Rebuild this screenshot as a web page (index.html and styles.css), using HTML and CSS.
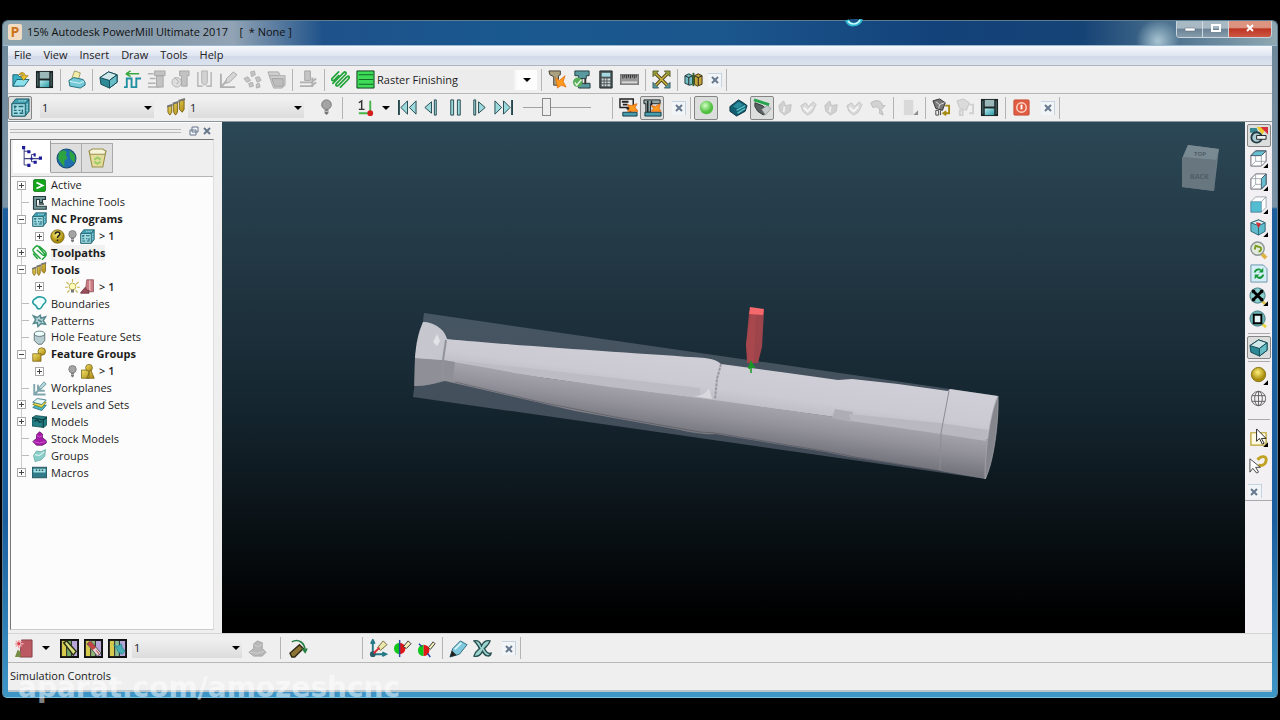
FILE: index.html
```html
<!DOCTYPE html>
<html lang="en">
  <head>
    <meta charset="UTF-8" />
    <meta name="viewport" content="width=device-width, initial-scale=1.0" />
    <title>Autodesk PowerMill Ultimate 2017</title>
    <link rel="stylesheet" href="styles.css">
  </head>
  <body>
    <!-- Icon library -->
    <svg class="sprite" aria-hidden="true">
      <defs>
        <linearGradient id="gTeal" x1="0" y1="0" x2="1" y2="1"><stop offset="0" stop-color="#b5ecef" /><stop offset="1" stop-color="#2b97a3" /></linearGradient>
        <linearGradient id="gGold" x1="0" y1="0" x2="1" y2="1"><stop offset="0" stop-color="#f3e26a" /><stop offset="1" stop-color="#a8850e" /></linearGradient>
        <radialGradient id="gBall" cx=".4" cy=".35"><stop offset="0" stop-color="#d4ffc4" /><stop offset="1" stop-color="#4fbf3f" /></radialGradient>
        <radialGradient id="gYBall" cx=".45" cy=".35"><stop offset="0" stop-color="#fff17a" /><stop offset="1" stop-color="#a98c0c" /></radialGradient>
      </defs>
      <symbol id="open" viewBox="0 0 20 20"><path d="M2 5h5l2 2h6v3L8 17H2z" fill="#3cb0c4" stroke="#1b6474" /><path d="M2 17l4-7h13l-5 7z" fill="#8be2ec" stroke="#1b6474" /><path d="M8 5c3-4 7-2 7 1h3l-5 5-3-5h3c0-2-2-2-5-1z" fill="#edc32a" stroke="#8b6b10" stroke-width=".7" /></symbol>
      <symbol id="save" viewBox="0 0 20 20"><path d="M1 1h18v18H1z" fill="#1c2526" /><path d="M5 2h10v7H5z" fill="#9bb8b8" /><path d="M5 11h10v7H5z" fill="url(#gTeal)" /><path d="M3 3v14M17 3v14" stroke="#577" /></symbol>
      <symbol id="print" viewBox="0 0 20 20"><path d="M5 9L8 1l6 2-2 7z" fill="#f4edaa" stroke="#8b8748" stroke-width=".8" /><path d="M2 11l5-3 10 2 2 3v3l-5 3-11-2z" fill="#73c9d7" stroke="#236d7c" /><path d="M3 12l10 2 5-2" fill="none" stroke="#d9f5fa" /></symbol>
      <symbol id="block" viewBox="0 0 20 20"><path d="M1 8l9-6 9 3v8l-8 6-9-4z" fill="#2d8995" stroke="#124a54" /><path d="M1 8l9-6 9 3-8 6z" fill="#d0e8ea" stroke="#124a54" /><path d="M11 11l8-6v8l-8 6z" fill="#68bdc6" stroke="#124a54" /></symbol>
      <symbol id="rapid" viewBox="0 0 20 20"><path d="M1 18h3V9h5v9h5V9h5" fill="none" stroke="#2290a1" stroke-width="2" /><path d="M3 4h14M3 4l5-3M3 4l5 3" stroke="#3aa83e" stroke-width="1.6" fill="none" /></symbol>
      <symbol id="gFeed" viewBox="0 0 20 20"><path d="M8 1h11v5H8z M10 6h7v12h-7z" fill="#c2c2c2" stroke="#a8a8a8" /><path d="M1 4h6M3 9h6M1 14h8M1 18h12" stroke="#b2b2b2" stroke-width="1.6" /></symbol>
      <symbol id="gPoint" viewBox="0 0 20 20"><circle cx="6" cy="13" r="5" fill="#ddd" stroke="#b2b2b2" /><path d="M9 1h10v5h-2v11h-6V6H9z" fill="#c2c2c2" stroke="#a8a8a8" /><path d="M4 8l4 4-2 3" stroke="#aaa" fill="none" /></symbol>
      <symbol id="gLead" viewBox="0 0 20 20"><path d="M7 1h6v11c0 5-6 5-6 0z" fill="#d2d2d2" stroke="#b2b2b2" /><path d="M3 2v15h5M17 2v15h-5" stroke="#bbb" stroke-width="1.700" fill="none" /></symbol>
      <symbol id="gAxis" viewBox="0 0 20 20"><path d="M2 4v14h15M3 17L15 3" stroke="#b1b1b1" stroke-width="2" fill="none" /><path d="M8 9l7-7 4 3-8 8-4 1z" fill="#d5d5d5" stroke="#aaa" /></symbol>
      <symbol id="gPattern" viewBox="0 0 20 20"><g fill="#c4c4c4" stroke="#a5a5a5" stroke-width=".8"><path d="M8 2l4-1 1 4-4 2zM1 9l4-2 3 4-4 2zM13 8l4-1 2 4-4 2zM6 14l4-1 1 4-4 1zM14 15l3-1 1 4-4 1z" /></g></symbol>
      <symbol id="gStack" viewBox="0 0 20 20"><path d="M1 2h11l2 4h5v10l-3 3H7l-2-5z" fill="#cfcfcf" stroke="#a9a9a9" /><path d="M3 6h10M5 9h12v8H8z" fill="#bdbdbd" stroke="#a2a2a2" /></symbol>
      <symbol id="gPress" viewBox="0 0 20 20"><path d="M6 1h6v10H6z" fill="#c4c4c4" stroke="#a5a5a5" /><path d="M1 13h12l5-4M1 17h12l5-4M14 8v10" fill="none" stroke="#b0b0b0" stroke-width="2" /></symbol>
      <symbol id="strategy" viewBox="0 0 20 20"><path d="M5 2L2 5c-2 2 0 4 2 6l7 7M5 2c2-2 4 0 5 2l6 7c2 2 0 4-2 2L7 7M10 2l7 6c3 3 2 6 0 8l-3 3M2 12l5 6" fill="none" stroke="#22a43a" stroke-width="2" stroke-linecap="round" /></symbol>
      <symbol id="strategyBar" viewBox="0 0 20 20"><path d="M1 9l7-7M2 14L13 3c2-2 4 0 2 2L6 14c-2 2 0 4 2 2L17 7c2-2 3 1 1 3l-8 8M1 9c-1 2 1 3 3 1l4-4" fill="none" stroke="#22a43a" stroke-width="1.800" stroke-linecap="round" /></symbol>
      <symbol id="raster" viewBox="0 0 20 20"><path d="M1 1h18v18H1z" fill="#3ddb58" stroke="#123a1c" /><path d="M3 5h15M3 10h15M3 15h15" stroke="#136a24" stroke-width="1.300" /></symbol>
      <symbol id="toolCheck" viewBox="0 0 20 20"><path d="M1 1h12v4l-2 1v10H6V7L2 5z" fill="#aaa17f" stroke="#463e30" /><path d="M8 8l4 3 6-5-2 6 3 6-5-2-4 3-1-6z" fill="#ff9a1e" stroke="#e06d0d" stroke-width=".8" /></symbol>
      <symbol id="machCheck" viewBox="0 0 20 20"><path d="M3 1h15v5h-3v3H7V6H3zM7 14h12v5H7z" fill="#599aa1" stroke="#243c40" /><path d="M10 9v6M14 9v6" stroke="#333" stroke-width="2" /><circle cx="6" cy="13" r="5" fill="#59ae5a" /><path d="M3 13l2 3 5-6" stroke="#e2f5dd" stroke-width="1.500" fill="none" /></symbol>
      <symbol id="calc" viewBox="0 0 20 20"><path d="M4 1h13v18H4z" fill="#4b5658" stroke="#202728" /><path d="M6 3h9v4H6z" fill="#a7dae0" /><path d="M6 10h2m1 0h2m1 0h3M6 13h2m1 0h2m1 0h3M6 16h2m1 0h2m1 0h3" stroke="#d2d7d7" stroke-width="2" /></symbol>
      <symbol id="ruler" viewBox="0 0 20 20"><path d="M0 5h20v10H0z" fill="#979797" stroke="#606060" /><path d="M3 5v4m2-4v3m2-3v4m2-4v3m2-3v4m2-4v3m2-3v4m2-4v3" stroke="#2c2c2c" /><path d="M2 13h16" stroke="#d7d7d7" stroke-width="2" /></symbol>
      <symbol id="cross" viewBox="0 0 20 20"><path d="M4 4l12 12M16 4L4 16" stroke="#4c4720" stroke-width="3.500" /><path d="M1 1h6L1 7zM19 1v6l-6-6z" fill="#94a236" stroke="#4c4720" stroke-width=".8" /><path d="M1 19v-6l6 6zM19 19h-6l6-6z" fill="#5599a4" stroke="#2c4c50" stroke-width=".8" /><path d="M4 4l12 12M16 4L4 16" stroke="#cfb83c" stroke-width="1.500" /></symbol>
      <symbol id="mirror" viewBox="0 0 20 20"><path d="M1 6l4-2 4 2v9l-3 1-5-2z" fill="#72bdc4" stroke="#203c3e" /><path d="M11 6l4-2 4 2v9l-5 2-3-2z" fill="#c5a53c" stroke="#3d3514" /><path d="M1 6l4 2 4-2M5 8v8M11 6l4 2 4-2M15 8v8" fill="none" stroke="#222" /><path d="M10 3v14" stroke="#37602e" stroke-width="2" /></symbol>
      <symbol id="nc" viewBox="0 0 20 20"><path d="M1 6l4-5h14v13l-4 5H1z" fill="#3f9fb0" stroke="#1d5a66" /><path d="M1 6h14v13H1z" fill="#a5dde5" stroke="#1d5a66" /><path d="M15 6l4-5" stroke="#1d5a66" /><path d="M4 8v3M3 9h3M8 9h5M3 13h3M8 13h2M12 12v3M3 16h4M9 16h4" stroke="#1b6a78" stroke-width="1.500" /><path d="M8 3h8M17 6v8" stroke="#c9f3f7" stroke-dasharray="2 1" /></symbol>
      <symbol id="tools" viewBox="0 0 20 20"><path d="M1 9l4-1v7l-2 3-2-3zM7 6l4-1v10l-2 3-2-3zM13 3l5-1v10l-2 3-3-3z" fill="url(#gGold)" stroke="#806617" /><path d="M0 9l6-2M6 6l6-2M12 3l7-2" stroke="#777" stroke-width="2" /></symbol>
      <symbol id="bulbOff" viewBox="0 0 20 20"><circle cx="10" cy="7" r="5" fill="#a4a4a4" stroke="#747474" /><path d="M8 12h4v4l-2 2-2-2z" fill="#777" /><path d="M8 14h4" stroke="#ccc" /></symbol>
      <symbol id="bulbOn" viewBox="0 0 20 20"><path d="M10 0v4M2 4l3 3M18 4l-3 3M0 11h4M16 11h4M3 18l3-3M17 18l-3-3" stroke="#c8b954" stroke-width="1.500" /><circle cx="10" cy="10" r="4.500" fill="#fffbb9" stroke="#a89e2c" /><path d="M8 14h4v4H8z" fill="#777" /></symbol>
      <symbol id="workplane" viewBox="0 0 20 20"><path d="M3 16h12M15 3v12" stroke="#45b54a" stroke-width="2" /><path d="M3 5l3-2v9M3 12h6" fill="none" stroke="#333" stroke-width="1.500" /><circle cx="15" cy="16" r="3" fill="#d61d1d" /></symbol>
      <symbol id="rewind" viewBox="0 0 20 20"><path d="M1 2v16" stroke="#25484d" stroke-width="2" /><path d="M10 3v14l-7-7zM19 3v14l-7-7z" fill="#9bd9dc" stroke="#25484d" /></symbol>
      <symbol id="stepBack" viewBox="0 0 20 20"><path d="M10 4v12l-7-6z" fill="#9bd9dc" stroke="#25484d" /><path d="M13 2h2v16h-2z" fill="#9bd9dc" stroke="#25484d" /></symbol>
      <symbol id="pause" viewBox="0 0 20 20"><path d="M5 2h3v16H5zM12 2h3v16h-3z" fill="#9bd9dc" stroke="#25484d" /></symbol>
      <symbol id="stepFwd" viewBox="0 0 20 20"><path d="M4 2h2v16H4z" fill="#9bd9dc" stroke="#25484d" /><path d="M9 4v12l7-6z" fill="#9bd9dc" stroke="#25484d" /></symbol>
      <symbol id="forward" viewBox="0 0 20 20"><path d="M19 2v16" stroke="#25484d" stroke-width="2" /><path d="M1 3v14l7-7zM10 3v14l7-7z" fill="#9bd9dc" stroke="#25484d" /></symbol>
      <symbol id="simA" viewBox="0 0 20 20"><path d="M1 1h14v9H1z" fill="#eee" stroke="#222" stroke-width="1.500" /><path d="M3 4h7M4 7h5M8 11h4v4" stroke="#222" stroke-width="2" /><path d="M4 15h15v4H4z" fill="#489eae" stroke="#163b43" /><path d="M9 7l4 1 6-2-2 4 3 4H9l2-3z" fill="#ff991f" stroke="#d9620d" stroke-width=".8" /></symbol>
      <symbol id="simB" viewBox="0 0 20 20"><path d="M1 2h17v4H8v9H3V6H1z" fill="#90a6a7" stroke="#222" /><path d="M5 3v13M9 3v5" stroke="#222" stroke-width="1.500" /><path d="M2 15h17v4H2z" fill="#489eae" stroke="#163b43" /><path d="M9 8l4 1 5-3-1 5 2 3H9l2-3z" fill="#ff991f" stroke="#d9620d" stroke-width=".8" /></symbol>
      <symbol id="ball" viewBox="0 0 20 20"><circle cx="10" cy="10" r="7" fill="url(#gBall)" /></symbol>
      <symbol id="stockBlue" viewBox="0 0 20 20"><path d="M1 9l9-7 5 3 4 3-2 6-9 5-7-5z" fill="#145e72" stroke="#073140" /><path d="M4 9l6-5 5 3-6 4z" fill="#2a8b9c" /><path d="M8 13l9-5M9 16l8-5" stroke="#56c2c7" stroke-width="1.500" /></symbol>
      <symbol id="stockGreen" viewBox="0 0 20 20"><path d="M2 5l8 3 6 5-5 5-6-4-3-5z" fill="#596060" stroke="#303737" /><path d="M9 12l6-4 4 3-6 7z" fill="#c6cccb" stroke="#777" stroke-width=".5" /><path d="M1 2l16 5" stroke="#25a44c" stroke-width="3" /></symbol>
      <symbol id="ghostA" viewBox="0 0 20 20"><path d="M3 8l5-5 2 5 6-1-1 7-6 4-5-4z" fill="#d0d0d0" stroke="#c2c2c2" /><path d="M9 9l-1 6M10 5l3-2" stroke="#eee" stroke-width="2" /></symbol>
      <symbol id="ghostB" viewBox="0 0 20 20"><path d="M2 8l5-3 3 4 5-5 3 3-4 8-5 3-5-4z" fill="#d9d9d9" stroke="#c4c4c4" /><path d="M5 10l4 4 5-5" stroke="#f7f7f7" fill="none" stroke-width="2" /></symbol>
      <symbol id="ghostC" viewBox="0 0 20 20"><path d="M3 5c6-4 12-2 12 3h3l-4 4 2 6-4-2c1-5-1-8-7-6z" fill="#d2d2d2" stroke="#bcbcbc" /></symbol>
      <symbol id="doc" viewBox="0 0 20 20"><path d="M4 2h10v16H4z" fill="#d9d9d9" /><path d="M19 13v5h-5z" fill="#8e8e8e" /></symbol>
      <symbol id="entity" viewBox="0 0 20 20"><path d="M1 3l7-2 6 4-3 8-7-2z" fill="#777" stroke="#333" /><path d="M4 4l4 3 5-2M8 7l-1 4" stroke="#ddd" fill="none" /><path d="M4 13h3v5H4zM9 13v5" fill="#eee" stroke="#444" /><path d="M14 8h4v8h-5m2-2l-3 2 3 2" stroke="#a78a12" stroke-width="2" fill="none" /></symbol>
      <symbol id="entityOff" viewBox="0 0 20 20"><path d="M1 3l7-2 6 4-3 8-7-2z" fill="#dadada" stroke="#c5c5c5" /><path d="M4 13h3v5H4zM14 7h4v9h-4" fill="none" stroke="#d0d0d0" stroke-width="2" /></symbol>
      <symbol id="power" viewBox="0 0 20 20"><rect x="2" y="2" width="16" height="16" rx="1" fill="#e05c42" stroke="#c9503b" /><circle cx="10" cy="10" r="5" fill="none" stroke="#ffd8ca" stroke-width="1.500" /><path d="M10 7v5" stroke="#fff" stroke-width="2" /></symbol>
      <symbol id="close" viewBox="0 0 12 12"><path d="M3 3l6 6M9 3L3 9" stroke="#67788e" stroke-width="2" /></symbol>
      <symbol id="float" viewBox="0 0 12 12"><path d="M4 2h6v5H4zM2 5h6v5H2z" fill="#f3f6fa" stroke="#65758a" /></symbol>

      <!-- Explorer -->
      <symbol id="treeTab" viewBox="0 0 20 20"><path d="M3 2v16M3 5h4M3 18h5M3 12h15M10 8v7M10 8h3M10 15h4" fill="none" stroke="#444a80" /><path d="M1 0h3v3H1zM6 4h3v3H6zM6 17h3v3H6zM12 7h2v3h-2zM12 14h3v3h-3zM17 10h3v3h-3zM9 11h2v2H9z" fill="#1c1b9b" /></symbol>
      <symbol id="globe" viewBox="0 0 20 20"><circle cx="10" cy="10" r="9" fill="#1e6fb0" stroke="#174c75" /><path d="M3 4c5-4 9 0 6 2l2 4-3 2v6L3 12l-1-3zM13 2l5 5v7l-4-3-1-4z" fill="#2da43f" /></symbol>
      <symbol id="bin" viewBox="0 0 20 20"><path d="M2 3h16l-3 15H5z" fill="#e4dc9d" stroke="#99904a" /><path d="M2 3l3-2h10l3 2-1 3H3z" fill="#f5f4da" stroke="#99904a" /><path d="M7 11l3-2 3 2M13 13l-3 2-3-2" stroke="#9bcc66" stroke-width="2" fill="none" /></symbol>
      <symbol id="active" viewBox="0 0 20 20"><rect x="2" y="2" width="16" height="16" rx="2" fill="#13a51b" stroke="#08720d" /><path d="M6 6l8 4-8 4" fill="none" stroke="#fff" stroke-width="2.500" /></symbol>
      <symbol id="machine" viewBox="0 0 20 20"><path d="M2 2h16v4h-4v4h-4V6H6v9h13v4H2z" fill="#74979a" stroke="#243b3d" stroke-width="1.500" /><path d="M9 12h7" stroke="#243b3d" stroke-width="2" /></symbol>
      <symbol id="question" viewBox="0 0 20 20"><circle cx="10" cy="10" r="9" fill="url(#gYBall)" stroke="#756010" /><path d="M7 7c0-4 7-4 6 0 0 2-3 2-3 5M10 14v2" fill="none" stroke="#222" stroke-width="2" /></symbol>
      <symbol id="cutter" viewBox="0 0 20 20"><path d="M9 1h9v16H7z" fill="#c97c84" stroke="#8d4f58" /><path d="M13 2v14" stroke="#eab7bb" stroke-width="2" /><path d="M1 18l6-7 2 4h3v4H1z" fill="#9c4e5a" stroke="#6c323b" /></symbol>
      <symbol id="boundary" viewBox="0 0 20 20"><path d="M5 3c4-3 11-2 13 2 2 5-3 4-4 8-3 6-7 5-8 1-1-3-5-2-5-6 0-3 2-4 4-5z" fill="#f2ffff" stroke="#299fa1" stroke-width="2.200" /></symbol>
      <symbol id="pattern" viewBox="0 0 20 20"><path d="M2 4l5 2 4-3 1 4 6-2-3 5 3 5-6-1-4 4-1-5-5 1 3-5z" fill="#b9d8da" stroke="#55898e" stroke-width="2" /><path d="M8 9l5 3" stroke="#55898e" stroke-width="2" /></symbol>
      <symbol id="hole" viewBox="0 0 20 20"><path d="M3 5v9l5 5h5l4-5V5z" fill="#b8cdd1" stroke="#465a5d" /><ellipse cx="10" cy="5" rx="7" ry="3.500" fill="#edffff" stroke="#465a5d" /></symbol>
      <symbol id="feature" viewBox="0 0 20 20"><circle cx="13" cy="6" r="5" fill="url(#gGold)" stroke="#756010" /><path d="M1 9h11v10H1z" fill="url(#gGold)" stroke="#756010" /></symbol>
      <symbol id="featureSet" viewBox="0 0 20 20"><path d="M2 8h10v11H2zM9 19l5-12 5 12z" fill="url(#gGold)" stroke="#756010" /><circle cx="12" cy="5" r="4.500" fill="url(#gGold)" stroke="#756010" /></symbol>
      <symbol id="planes" viewBox="0 0 20 20"><path d="M3 4v14h15M3 18l9-9M8 5v8h9" fill="none" stroke="#7fa6ac" stroke-width="2.500" /><path d="M9 9l7-8 3 3-7 7z" fill="#b0d8dd" stroke="#58838b" /></symbol>
      <symbol id="levels" viewBox="0 0 20 20"><path d="M1 14l6-5 12 2-6 7z" fill="#48b6c3" stroke="#1a6470" /><path d="M1 10l6-5 12 2-6 7z" fill="#e7d84c" stroke="#77731c" /><path d="M1 7l6-5 12 2-6 6z" fill="#e6f8f7" stroke="#1a6470" /></symbol>
      <symbol id="models" viewBox="0 0 20 20"><path d="M0 5l5-3 15 2v10l-4 4-16-2z" fill="#237f84" stroke="#0d4448" /><path d="M0 5l15 3v10M15 8l5-4M3 10l4-2 3 3 3-1" fill="none" stroke="#0b3a3d" stroke-width="1.500" /></symbol>
      <symbol id="stock" viewBox="0 0 20 20"><path d="M1 14l5-4V5l4-4 4 3v5l5 4v3l-5 3H6z" fill="#a61ba7" stroke="#5b0c60" /><path d="M6 6l4 2 4-2M2 14l8 2 8-2" fill="none" stroke="#d767d8" /></symbol>
      <symbol id="group" viewBox="0 0 20 20"><path d="M2 10l4-6 6 1 6-3-1 9-5 5-8 2z" fill="#88cdc8" stroke="#65a7a2" /><path d="M4 9l6 1 6-5" fill="none" stroke="#ccefec" stroke-width="2" /></symbol>
      <symbol id="macro" viewBox="0 0 20 20"><path d="M0 3h20v14H0z" fill="#317a87" stroke="#183f47" /><path d="M2 5h16v5H2z" fill="#a5e0e4" /><path d="M5 7h2m2 0h2m2 0h2" stroke="#22555d" stroke-width="2" /></symbol>

      <!-- View bar -->
      <symbol id="toolView" viewBox="0 0 20 20"><path d="M1 2h7l2 5H1z" fill="#3a8794" /><path d="M8 1h11l-5 8z" fill="#eecb2b" /><path d="M12 1h8v8z" fill="#d8303a" /><circle cx="8" cy="12" r="5.500" fill="#adcbd3" stroke="#243c44" stroke-width="2" /><path d="M8 10h10v4H8z" fill="#eaf0f2" stroke="#222" /></symbol>
      <symbol id="cubeTop" viewBox="0 0 20 20"><path d="M2 7l5-5h11v11l-5 5H2z" fill="#fff" stroke="#667" /><path d="M2 7l5-5h11l-5 5z" fill="#65bfd0" stroke="#456" /><path d="M13 7v11M2 18l5-5h11M7 7v6" fill="none" stroke="#8a959c" stroke-width=".8" /><path d="M20 15v5h-5z" /></symbol>
      <symbol id="cubeRight" viewBox="0 0 20 20"><path d="M2 7l5-5h11v11l-5 5H2z" fill="#fff" stroke="#667" /><path d="M13 7l5-5v11l-5 5z" fill="#65bfd0" stroke="#456" /><path d="M2 7h11M2 18l5-5h6M7 2v11" fill="none" stroke="#8a959c" stroke-width=".8" /><path d="M20 15v5h-5z" /></symbol>
      <symbol id="cubeFront" viewBox="0 0 20 20"><path d="M2 7l5-5h11v11l-5 5H2zM13 7l5-5" fill="#fff" stroke="#9aa5aa" /><path d="M2 7h11v11H2z" fill="#54bdd2" stroke="#368" stroke-width=".5" /><path d="M20 15v5h-5z" /></symbol>
      <symbol id="cubeIso" viewBox="0 0 20 20"><path d="M2 5l8-3 7 3v9l-7 4-8-4z" fill="#5ebccd" stroke="#2d6573" /><path d="M2 5l8 3 7-3-7-3z" fill="#dbf3f6" stroke="#2d6573" /><path d="M10 8v10" stroke="#2d6573" /><path d="M8 5l4 1-2 4z" fill="#d22c35" stroke="#d22c35" /><path d="M20 15v5h-5z" /></symbol>
      <symbol id="zoomLast" viewBox="0 0 20 20"><path d="M13 13l5 5" stroke="#e0b24a" stroke-width="4" /><circle cx="9" cy="8" r="7" fill="#e3ecdc" stroke="#8a9496" stroke-width="1.500" /><path d="M6 9l1-4 3 1c4 0 3 5 0 5" fill="none" stroke="#7b9b25" stroke-width="2" /></symbol>
      <symbol id="refresh" viewBox="0 0 20 20"><path d="M2 1h13l4 4v14H2z" fill="#d5edf6" stroke="#6993ac" /><path d="M5 9c1-5 6-5 8-3l2-2v5h-5l2-2c-2-1-4 0-5 2zM16 11c-1 5-6 6-8 3l-2 2v-5h5l-2 2c2 1 4 0 5-2z" fill="#149838" /></symbol>
      <symbol id="zoomFit" viewBox="0 0 20 20"><path d="M12 13l5 5" stroke="#e0c34a" stroke-width="3" /><circle cx="9" cy="9" r="8" fill="#8dced0" stroke="#417a80" /><path d="M4 4l10 10M14 4L4 14" stroke="#000" stroke-width="3" /><path d="M3 3h4L3 7zM15 3v4l-4-4zM3 15v-4l4 4zM15 15h-4l4-4z" /><path d="M20 15v5h-5z" /></symbol>
      <symbol id="zoomBox" viewBox="0 0 20 20"><path d="M12 13l6 5" stroke="#e7d243" stroke-width="3" /><circle cx="9" cy="9" r="8" fill="#6cb6ba" stroke="#417a80" /><path d="M5 5h8v9H5z" fill="#e5f4f5" stroke="#000" stroke-width="2" /></symbol>
      <symbol id="shade" viewBox="0 0 20 20"><circle cx="10" cy="9" r="7.500" fill="url(#gYBall)" stroke="#84700d" /><path d="M20 15v5h-5z" /></symbol>
      <symbol id="wire" viewBox="0 0 20 20"><g fill="none" stroke="#626262"><circle cx="10" cy="10" r="7.500" /><ellipse cx="10" cy="10" rx="4" ry="7.500" /><path d="M3 7h14M3 13h14M10 2v16" /></g></symbol>
      <symbol id="selectBox" viewBox="0 0 20 20"><path d="M2 5h16v13H2z" fill="#fdfae3" stroke="#b99f2a" stroke-width="1.300" /><path d="M8 1v13l3-3 3 6 2-1-3-5h5z" fill="#fff" stroke="#222" /><path d="M20 15v5h-5z" /></symbol>
      <symbol id="selectLast" viewBox="0 0 20 20"><path d="M9 5c4-5 10-4 9 1s-6 6-8 4" fill="none" stroke="#c1a222" stroke-width="3" /><path d="M1 4v14l3-4 4 5 2-1-3-5h5z" fill="#fff" stroke="#444" /></symbol>

      <!-- Tool bar -->
      <symbol id="newTool" viewBox="0 0 20 20"><path d="M8 1h11v18H6z" fill="#bc5861" stroke="#87414a" /><path d="M5 1v9M1 5h9M2 2l6 6M8 2L2 8" stroke="#f0a6aa" stroke-width="1.500" /><circle cx="5" cy="5" r="1.500" fill="#d43d48" /><path d="M1 19l3-8 3 3v5z" fill="#778d43" /></symbol>
      <symbol id="toolA" viewBox="0 0 20 20"><path d="M1 1h18v18H1z" fill="#b6a7d8" stroke="#111" stroke-width="2" /><path d="M2 2h5v16H2z" fill="#d6ca4c" /><path d="M7 2h5v16H7z" fill="#77ad67" /><path d="M12 2v16M7 8v10" stroke="#222" /><path d="M4 4l3-2 10 11-3 4z" fill="#d9df83" stroke="#2c3012" stroke-width="1.500" /></symbol>
      <symbol id="toolB" viewBox="0 0 20 20"><path d="M1 1h18v18H1z" fill="#b6a7d8" stroke="#111" stroke-width="2" /><path d="M2 2h5v16H2z" fill="#d6ca4c" /><path d="M7 2h5v16H7z" fill="#94b878" /><path d="M7 8v10M12 2v16" stroke="#222" /><path d="M3 5l4-3 11 13-4 3z" fill="#e5cfd0" stroke="#555" /><path d="M4 5l3-2 5 6-3 2zM13 12l3 4" stroke="#b63939" fill="#c44444" /></symbol>
      <symbol id="toolC" viewBox="0 0 20 20"><path d="M1 1h18v18H1z" fill="#b6a7d8" stroke="#111" stroke-width="2" /><path d="M2 2h5v16H2z" fill="#d6ca4c" /><path d="M7 2h5v16H7z" fill="#8cbd96" /><path d="M7 2v16M12 2v16" stroke="#222" /><path d="M6 6l4 2 4-3 1 4 3 4-3 3-4-2-2-4z" fill="#49aeb3" stroke="#1a7e85" stroke-width=".7" /></symbol>
      <symbol id="stockOff" viewBox="0 0 20 20"><path d="M1 14l5-4V5l4-3 5 2v6l4 4-4 4H6z" fill="#b8b8b8" stroke="#a4a4a4" /><path d="M6 6l4 2 5-2M2 14l8 1 7-2" fill="none" stroke="#d0d0d0" /></symbol>
      <symbol id="swing" viewBox="0 0 20 20"><path d="M1 15L11 6l4 4-9 9H3z" fill="#8d7434" stroke="#302813" stroke-width="1.500" /><path d="M3 3c7-4 14 1 14 10m-3-3l3 4 2-4" fill="none" stroke="#227e40" stroke-width="1.700" /></symbol>
      <symbol id="axes" viewBox="0 0 20 20"><path d="M4 2v14h13M2 5l2-4 2 4M14 14l4 2-4 2" fill="none" stroke="#257986" stroke-width="2" /><circle cx="4" cy="16" r="3" fill="#255d66" /><path d="M9 9l6-7 4 4-7 6z" fill="#ebe5af" stroke="#6e692e" /><path d="M5 15l6-6" stroke="#dc2831" stroke-width="2" /></symbol>
      <symbol id="ballEnd" viewBox="0 0 20 20"><path d="M1 10a6 6 0 0 1 6-6v12a6 6 0 0 1-6-6" fill="#10c71c" /><path d="M7 4a6 6 0 0 1 0 12z" fill="#e11616" /><path d="M7 1v18" stroke="#2a47a3" stroke-width="1.500" /><path d="M11 8l5-6 3 3-5 5z" fill="#f5f0b7" stroke="#333" /></symbol>
      <symbol id="ballTip" viewBox="0 0 20 20"><path d="M1 12a6 6 0 0 1 6-6v12a6 6 0 0 1-6-6" fill="#10c71c" /><path d="M7 6a6 6 0 0 1 0 12z" fill="#e11616" /><path d="M2 5l3 3M11 15l3 4" stroke="#2a47a3" stroke-width="1.500" /><path d="M12 9l5-6 2 2-5 6z" fill="#f5f0b7" stroke="#333" /></symbol>
      <symbol id="pen" viewBox="0 0 20 20"><path d="M1 19l3-9 8-8 7 4-8 10z" fill="#7fc7dc" stroke="#346e7c" /><path d="M1 19l2-7 5 5z" fill="#222" /><path d="M6 11l7-7" stroke="#d2f3fa" stroke-width="2" /></symbol>
      <symbol id="erase" viewBox="0 0 20 20"><path d="M1 2c4-1 6 0 8 5 2-4 5-6 9-5-1 4-4 6-6 8 2 4 4 6 7 5-1 4-6 4-9-2-2 4-5 6-9 5 1-5 4-6 6-8-2-3-3-6-6-8z" fill="#9bd4ce" stroke="#284f50" stroke-width="1.500" /></symbol>
    </svg>

    <div class="window">
      <header class="titlebar">
        <span class="logo">P</span>
        <h1>15% Autodesk PowerMill Ultimate 2017 &nbsp;&nbsp; [&nbsp; * None ]</h1>
        <div class="window-buttons">
          <button aria-label="Minimize"><svg viewBox="0 0 12 10"><path d="M1 5h10v3H1z" fill="#fff" stroke="#567" stroke-width=".5" /></svg></button>
          <button aria-label="Maximize"><svg viewBox="0 0 12 10"><path d="M2 2h8v6H2z" fill="none" stroke="#fff" stroke-width="2" /></svg></button>
          <button class="quit" aria-label="Close"><svg viewBox="0 0 12 10"><path d="M3 2l6 6M9 2L3 8" stroke="#fff" stroke-width="2" /></svg></button>
        </div>
      </header>

      <nav class="menubar">
        <a href="#file">File</a>
        <a href="#view">View</a>
        <a href="#insert">Insert</a>
        <a href="#draw">Draw</a>
        <a href="#tools">Tools</a>
        <a href="#help">Help</a>
      </nav>

      <div class="toolbar main-toolbar">
        <button aria-label="Open"><svg><use href="#open" /></svg></button>
        <button aria-label="Save"><svg><use href="#save" /></svg></button>
        <i class="sep"></i>
        <button aria-label="Print"><svg><use href="#print" /></svg></button>
        <i class="sep"></i>
        <button aria-label="Block"><svg><use href="#block" /></svg></button>
        <button aria-label="Rapid moves"><svg><use href="#rapid" /></svg></button>
        <button aria-label="Feeds"><svg><use href="#gFeed" /></svg></button>
        <button aria-label="Start point"><svg><use href="#gPoint" /></svg></button>
        <button aria-label="Leads"><svg><use href="#gLead" /></svg></button>
        <button aria-label="Tool axis"><svg><use href="#gAxis" /></svg></button>
        <button aria-label="Points"><svg><use href="#gPattern" /></svg></button>
        <button aria-label="Thickness"><svg><use href="#gStack" /></svg></button>
        <i class="sep"></i>
        <button aria-label="Automatic tool"><svg><use href="#gPress" /></svg></button>
        <i class="sep"></i>
        <button aria-label="Strategies"><svg><use href="#strategyBar" /></svg></button>
        <svg class="raster"><use href="#raster" /></svg>
        <div class="combo strategy">
          <select aria-label="Strategy"><option>Raster Finishing</option></select>
        </div>
        <i class="sep"></i>
        <button aria-label="Verify toolpath"><svg><use href="#toolCheck" /></svg></button>
        <button aria-label="Verify machine"><svg><use href="#machCheck" /></svg></button>
        <button aria-label="Calculator"><svg><use href="#calc" /></svg></button>
        <button aria-label="Measure"><svg><use href="#ruler" /></svg></button>
        <i class="sep"></i>
        <button aria-label="Transform"><svg><use href="#cross" /></svg></button>
        <i class="sep"></i>
        <button aria-label="Mirror"><svg><use href="#mirror" /></svg></button>
        <button class="dismiss" aria-label="Close toolbar"><svg><use href="#close" /></svg></button>
        <i class="sep"></i>
      </div>

      <div class="toolbar sim-toolbar">
        <button class="pressed" aria-label="NC program"><svg><use href="#nc" /></svg></button>
        <div class="combo short">
          <select aria-label="NC program or toolpath"><option>1</option></select>
        </div>
        <button class="spaced" aria-label="Tool"><svg><use href="#tools" /></svg></button>
        <div class="combo tool">
          <select aria-label="Simulation tool"><option>1</option></select>
        </div>
        <button class="spaced" aria-label="Light"><svg><use href="#bulbOff" /></svg></button>
        <i class="sep"></i>
        <button class="workplane" aria-label="Workplane"><svg><use href="#workplane" /></svg></button>
        <button class="drop" aria-label="Workplane list"></button>
        <button aria-label="Rewind"><svg><use href="#rewind" /></svg></button>
        <button aria-label="Step back"><svg><use href="#stepBack" /></svg></button>
        <button aria-label="Pause"><svg><use href="#pause" /></svg></button>
        <button aria-label="Step forward"><svg><use href="#stepFwd" /></svg></button>
        <button aria-label="Fast forward"><svg><use href="#forward" /></svg></button>
        <input class="speed" type="range" min="0" max="100" value="33" aria-label="Speed" />
        <i class="sep"></i>
        <button aria-label="Machine display"><svg><use href="#simA" /></svg></button>
        <button class="pressed" aria-label="Machine collisions"><svg><use href="#simB" /></svg></button>
        <button class="dismiss far" aria-label="Close simulation toolbar"><svg><use href="#close" /></svg></button>
        <i class="sep"></i>
        <button class="pressed" aria-label="ViewMill"><svg><use href="#ball" /></svg></button>
        <i class="sep blank"></i>
        <button aria-label="Stock display"><svg><use href="#stockBlue" /></svg></button>
        <button class="pressed" aria-label="Rotate"><svg><use href="#stockGreen" /></svg></button>
        <button class="ghost" aria-label="Plain shaded"><svg><use href="#ghostA" /></svg></button>
        <button class="ghost" aria-label="Shiny shaded"><svg><use href="#ghostB" /></svg></button>
        <button class="ghost" aria-label="Rainbow shaded"><svg><use href="#ghostA" /></svg></button>
        <button class="ghost" aria-label="Direction shaded"><svg><use href="#ghostB" /></svg></button>
        <button class="ghost" aria-label="Cutting shaded"><svg><use href="#ghostC" /></svg></button>
        <i class="sep"></i>
        <button aria-label="Section"><svg><use href="#doc" /></svg></button>
        <i class="sep"></i>
        <button aria-label="Save state"><svg><use href="#entity" /></svg></button>
        <button aria-label="Restore state"><svg><use href="#entityOff" /></svg></button>
        <button aria-label="Save stock"><svg><use href="#save" /></svg></button>
        <i class="sep"></i>
        <button aria-label="Exit ViewMill"><svg><use href="#power" /></svg></button>
        <button class="dismiss far" aria-label="Close ViewMill toolbar"><svg><use href="#close" /></svg></button>
        <i class="sep"></i>
      </div>

      <main class="workspace">
        <aside class="explorer">
          <div class="pane-header">
            <span class="grip"></span>
            <button aria-label="Float pane"><svg><use href="#float" /></svg></button>
            <button aria-label="Close pane"><svg><use href="#close" /></svg></button>
          </div>
          <div class="pane-body">
            <div class="tabs">
              <button class="current" aria-label="Explorer"><svg><use href="#treeTab" /></svg></button>
              <button aria-label="Browser"><svg><use href="#globe" /></svg></button>
              <button aria-label="Recycle bin"><svg><use href="#bin" /></svg></button>
            </div>
            <ul class="tree">
              <li><button class="toggle" aria-label="Expand Active"></button><svg><use href="#active" /></svg>Active</li>
              <li><i class="branch"></i><svg><use href="#machine" /></svg>Machine Tools</li>
              <li class="bold"><button class="toggle open" aria-label="Collapse NC Programs"></button><svg><use href="#nc" /></svg>NC Programs</li>
              <li class="child"><button class="toggle" aria-label="Expand NC program 1"></button><svg><use href="#question" /></svg><svg class="bulb"><use href="#bulbOff" /></svg><svg><use href="#nc" /></svg>&gt; 1</li>
              <li class="bold"><button class="toggle" aria-label="Expand Toolpaths"></button><svg><use href="#strategy" /></svg><span class="hot">Toolpaths</span></li>
              <li class="bold"><button class="toggle open" aria-label="Collapse Tools"></button><svg><use href="#tools" /></svg>Tools</li>
              <li class="child"><button class="toggle" aria-label="Expand tool 1"></button><i class="space"></i><svg class="bulb"><use href="#bulbOn" /></svg><svg><use href="#cutter" /></svg>&gt; 1</li>
              <li><i class="branch"></i><svg><use href="#boundary" /></svg>Boundaries</li>
              <li><i class="branch"></i><svg><use href="#pattern" /></svg>Patterns</li>
              <li><i class="branch"></i><svg><use href="#hole" /></svg>Hole Feature Sets</li>
              <li class="bold"><button class="toggle open" aria-label="Collapse Feature Groups"></button><svg><use href="#feature" /></svg>Feature Groups</li>
              <li class="child"><button class="toggle" aria-label="Expand feature group 1"></button><i class="space"></i><svg class="bulb"><use href="#bulbOff" /></svg><svg><use href="#featureSet" /></svg>&gt; 1</li>
              <li><i class="branch"></i><svg><use href="#planes" /></svg>Workplanes</li>
              <li><button class="toggle" aria-label="Expand Levels and Sets"></button><svg><use href="#levels" /></svg>Levels and Sets</li>
              <li><button class="toggle" aria-label="Expand Models"></button><svg><use href="#models" /></svg>Models</li>
              <li><i class="branch"></i><svg><use href="#stock" /></svg>Stock Models</li>
              <li><i class="branch"></i><svg><use href="#group" /></svg>Groups</li>
              <li><button class="toggle" aria-label="Expand Macros"></button><svg><use href="#macro" /></svg>Macros</li>
            </ul>
          </div>
        </aside>

        <section class="viewport">
          <svg viewBox="222 122 1023 511" role="img" aria-label="Turned part inside its block">
            <defs>
              <linearGradient id="upper" gradientUnits="userSpaceOnUse" x1="700" y1="355" x2="693" y2="405"><stop offset="0" stop-color="#d0cfd7" /><stop offset=".6" stop-color="#cbcad2" /><stop offset="1" stop-color="#b9b8c0" /></linearGradient>
              <linearGradient id="lower" gradientUnits="userSpaceOnUse" x1="700" y1="392" x2="694" y2="434"><stop offset="0" stop-color="#aaa9b1" /><stop offset=".5" stop-color="#94939b" /><stop offset="1" stop-color="#76767e" /></linearGradient>
              <linearGradient id="glass" x1="0" y1="0" x2="0" y2="1"><stop offset="0" stop-color="#465662" /><stop offset="1" stop-color="#414a57" /></linearGradient>
            </defs>
            <!-- block -->
            <path d="M424 313L998 396 986 479 413 397z" fill="url(#glass)" />
            <!-- part, lit side -->
            <path d="M423 322c9 0 18 6 24 17 60 6 190 14 258 19 8 1 13 3 16 6l67 9 50 7 14-1 46 5 50 7 2-2 48 7-7 44-45-7-89-13-157-21-155-21-102-14-28-2c1-14 3-25 8-36z" fill="url(#upper)" />
            <!-- part, shaded side -->
            <path d="M415 358l28 2 102 18 155 20 157 22 89 13 45 7-5 39-46-8-90-14-25-5-110-18c-8 1-22-1-35-4l-105-19-82-19-48-11c-9 2-18 5-31 5z" fill="url(#lower)" />
            <path d="M415 358l28 2 12 2-2 18-7-1c-9 4-18 7-31 7z" fill="#8f8f97" />
            <path d="M423 322c15 1 23 10 24 18l-4 20-28-2c1-14 3-25 8-36z" fill="#c6c6ce" />
            <path d="M437 334l3 7-3 5-4-4z" fill="#e2e2e8" />
            <path d="M446 340l-3 20v19" fill="none" stroke="#92929a" stroke-width="2" />
            <path d="M452 360l93 10 155 18v10l-90-11-95-14z" fill="#bdbcc4" />
            <path d="M721 364l-4 15-2 20" fill="none" stroke="#9998a1" stroke-width="2" stroke-dasharray="3 1" />
            <path d="M694 396c8 0 12-3 15-8l3 11z" fill="#d9d8df" />
            <path d="M835 409l18 3-2 10-19-4z" fill="#aeadb5" />
            <path d="M849 414l91 9 48 7-2 11-45-7-90-13z" fill="#b9b8c0" />
            <path d="M949 391l-8 42-1 37" fill="none" stroke="#8d8c95" />
            <path d="M455 382l85 20 70 14 90 16 15 1 115 19 25 5 85 14" fill="none" stroke="#3a3d46" stroke-opacity=".4" />
            <!-- end face -->
            <path d="M998 396c-7 15-13 51-13 83 8-14 14-56 13-83z" fill="#85858d" stroke="#aaa9b0" stroke-width=".7" />
            <!-- cutter -->
            <path d="M749 313l15-2-2 36-4 16h-11l-1-18z" fill="#9d454b" />
            <path d="M751 314l5 1-2 47h-5l-3-17z" fill="#a9474e" />
            <path d="M750 307l14 2-1 6-14-1z" fill="#f5696d" />
            <path d="M751 361v12M748 367h7M749 369l2-7 3 6" fill="none" stroke="#189b20" stroke-width="1.500" />
            <!-- view cube -->
            <path d="M1188 145l31 4-5 42-32-4 1-31z" fill="#6b7b84" />
            <path d="M1188 145l31 4-3 11-33-3z" fill="#7a8a92" />
            <path d="M1182 157l34 3-2 31-32-4z" fill="#67767f" />
            <text x="1190" y="179" class="cube-text">BACK</text>
            <text x="1194" y="156" class="cube-text top">TOP</text>
          </svg>
        </section>

        <div class="viewbar">
          <button class="pressed" aria-label="Tool view"><svg><use href="#toolView" /></svg></button>
          <button aria-label="View from top"><svg><use href="#cubeTop" /></svg></button>
          <button aria-label="View from right"><svg><use href="#cubeRight" /></svg></button>
          <button aria-label="View from front"><svg><use href="#cubeFront" /></svg></button>
          <button aria-label="Isometric view"><svg><use href="#cubeIso" /></svg></button>
          <button aria-label="Last view"><svg><use href="#zoomLast" /></svg></button>
          <button aria-label="Refresh"><svg><use href="#refresh" /></svg></button>
          <button aria-label="Zoom to fit"><svg><use href="#zoomFit" /></svg></button>
          <button aria-label="Zoom to box"><svg><use href="#zoomBox" /></svg></button>
          <hr />
          <button class="pressed" aria-label="Block display"><svg><use href="#block" /></svg></button>
          <hr />
          <button aria-label="Shaded"><svg><use href="#shade" /></svg></button>
          <button aria-label="Wireframe"><svg><use href="#wire" /></svg></button>
          <hr class="wide" />
          <button aria-label="Box selection"><svg><use href="#selectBox" /></svg></button>
          <button class="last" aria-label="Last selection"><svg><use href="#selectLast" /></svg></button>
          <button class="dismiss" aria-label="Close view toolbar"><svg><use href="#close" /></svg></button>
          <hr class="end" />
        </div>
      </main>

      <div class="toolbar tool-toolbar">
        <button class="wide" aria-label="Create tool"><svg><use href="#newTool" /></svg></button>
        <button class="drop" aria-label="Tool types"></button>
        <button class="first" aria-label="Tool database"><svg><use href="#toolA" /></svg></button>
        <button aria-label="Tool holder"><svg><use href="#toolB" /></svg></button>
        <button aria-label="Tool shape"><svg><use href="#toolC" /></svg></button>
        <div class="combo active-tool">
          <select aria-label="Active tool"><option>1</option></select>
        </div>
        <button class="wide" aria-label="Stock model"><svg><use href="#stockOff" /></svg></button>
        <i class="sep after-stock"></i>
        <button aria-label="Tool swing"><svg><use href="#swing" /></svg></button>
        <i class="sep after-gap"></i>
        <button aria-label="Tool axes"><svg><use href="#axes" /></svg></button>
        <button aria-label="Tool centre"><svg><use href="#ballEnd" /></svg></button>
        <button aria-label="Tool tip"><svg><use href="#ballTip" /></svg></button>
        <i class="sep"></i>
        <button aria-label="Draw"><svg><use href="#pen" /></svg></button>
        <button aria-label="Erase"><svg><use href="#erase" /></svg></button>
        <button class="dismiss far" aria-label="Close tool toolbar"><svg><use href="#close" /></svg></button>
        <i class="sep"></i>
      </div>

      <footer class="statusbar">Simulation Controls</footer>
    </div>

    <svg class="busy" viewBox="0 0 18 8" aria-hidden="true"><path d="M2 1c2 6 12 6 14-1" fill="none" stroke="#2fb8d0" stroke-width="4" /><path d="M3 2c3 4 9 4 12-1" fill="none" stroke="#c8f8fb" stroke-width="1.500" /><path d="M5 0h8v2c-3 2-5 2-8 0z" fill="#1d4f83" /></svg>
    <div class="watermark">aparat.com/amozeshcnc</div>
  </body>
</html>
```
FILE: styles.css
```css
* {
  box-sizing: border-box;
}
body {
  margin: 0;
  height: 100vh;
  padding: 20px 2px 22px;
  background: #000;
  color: #1c1c1c;
  font-family: "Open Sans", "Noto Sans", sans-serif;
  font-size: 11px;
  line-height: 16px;
  overflow: hidden;
}
button {
  margin: 0;
  padding: 0;
  border: 0;
  background: none;
  font: inherit;
}
.sprite {
  position: absolute;
  width: 0;
  height: 0;
}

/* Window frame */
.window {
  height: 100%;
  display: flex;
  flex-direction: column;
  padding: 0 5px 5px;
  border-radius: 6px 6px 5px 5px;
  border: 1px solid #5c7f96;
  border-bottom-color: #7cc0e0;
  background: linear-gradient(#6c8797 0, #7b93a6 186px, #1c5f9c 188px, #1a5e9e 500px, #3d96c6 100%);
}
.titlebar {
  flex: 0 0 25px;
  display: flex;
  align-items: center;
  margin: 0 -5px;
  padding: 0 0 2px 5px;
  border-radius: 6px 6px 0 0;
  border-bottom: 1px solid #9db9d2;
  background:
    radial-gradient(circle at 1155px 20px, #a9c5d2 0, #a9c5d200 22px),
    linear-gradient(90deg, #8fa5ae 0, #8599a9 130px, #91a3b4 230px, #1f528a 320px, #19588f 500px, #1b568c 720px, #13427a 930px, #164376 1080px, #486e8c 1160px, #8fa8b2 100%);
}
.titlebar h1 {
  flex: 1;
  margin: 0;
  font-size: 11px;
  font-weight: normal;
  color: #111;
}
.logo {
  width: 14px;
  margin-right: 5px;
  border-radius: 2px;
  background: #f3dcc4;
  color: #cc741b;
  font-size: 14px;
  font-weight: bold;
  text-align: center;
}
.window-buttons {
  display: flex;
  align-self: flex-start;
  margin-right: 5px;
  border: 1px solid #c8d5dd;
  border-top: 0;
  border-radius: 0 0 4px 4px;
  overflow: hidden;
}
.window-buttons button {
  width: 26px;
  height: 16px;
  padding-bottom: 2px;
  border-right: 1px solid #d0dae1;
  background: linear-gradient(#a9b9c4 45%, #6b8295 50%, #869cab);
}
.window-buttons .quit {
  width: 42px;
  border-right: 0;
  background: linear-gradient(#dc9480 40%, #bd3523 50%, #cd5844);
}
.window-buttons svg {
  display: block;
  width: 12px;
  height: 10px;
  margin: 0 auto;
}

.menubar {
  flex: 0 0 20px;
  display: flex;
  align-items: center;
  gap: 12px;
  padding: 0 0 2px 6px;
  border-bottom: 1px solid #aeb4bd;
  background: linear-gradient(#f5f8fc, #dfe5f1 50%, #d2daea 55%, #dce3ef);
}
.menubar a {
  color: #222;
  text-decoration: none;
}

/* Toolbars */
.toolbar {
  flex: 0 0 28px;
  display: flex;
  align-items: center;
  background: #efefef;
  border-bottom: 1px solid #b7b7b7;
}
.toolbar button {
  flex: 0 0 24px;
  height: 24px;
  display: flex;
  align-items: center;
  justify-content: center;
}
.toolbar svg {
  flex: none;
  width: 19px;
  height: 19px;
}
.toolbar .pressed,
.viewbar .pressed {
  border: 1px solid #858585;
  border-radius: 2px;
  background: #dcdede;
}
.toolbar .ghost {
  flex-basis: 23px;
}
.sep {
  flex: 0 0 8px;
  height: 22px;
  background: linear-gradient(#b4b4b4, #b4b4b4) center / 1px 100% no-repeat;
}
.sep.blank {
  background: none;
}
.toolbar .dismiss,
.viewbar .dismiss {
  flex: 0 0 14px;
  height: 14px;
  border: 1px solid #c5d3e0;
  border-width: 1px 1px 0 0;
  background: #f1f5f8;
}
.toolbar .dismiss {
  margin-left: 3px;
}
.toolbar .far {
  margin-left: 8px;
}
.toolbar .dismiss svg {
  width: 12px;
  height: 12px;
}
.raster {
  margin-left: 4px;
}
.combo {
  position: relative;
  height: 20px;
}
.combo select {
  width: 100%;
  height: 100%;
  padding: 0 2px;
  border: 0;
  background: linear-gradient(#f1f1f1, #dcdcdc);
  color: #1c1c1c;
  font: inherit;
  appearance: none;
}
.combo::after,
.drop::after {
  content: "";
  border: 4px solid transparent;
  border-top-color: #000;
  border-bottom: 0;
}
.combo::after {
  position: absolute;
  right: 2px;
  top: 8px;
  pointer-events: none;
}
.combo.strategy {
  width: 162px;
}
.combo.strategy::after {
  right: 6px;
}
.combo.strategy select {
  background: linear-gradient(90deg, #ececec 138px, #fdfdfd 142px);
}
.combo.short {
  width: 114px;
  margin-left: 8px;
}
.combo.tool {
  width: 116px;
}
.combo.active-tool {
  width: 110px;
  margin-left: 3px;
}
.toolbar .spaced {
  margin-left: 10px;
}
.toolbar .workplane {
  margin-left: 7px;
}
.toolbar .drop {
  flex-basis: 18px;
}
.speed {
  width: 68px;
  height: 20px;
  margin: 0 17px 0 8px;
  background: none;
  appearance: none;
}
.speed::-webkit-slider-runnable-track {
  height: 1px;
  background: #a2a2a2;
}
.speed::-webkit-slider-thumb {
  width: 9px;
  height: 18px;
  margin-top: -9px;
  border: 1px solid #888;
  background: #eee;
  appearance: none;
}
.sim-toolbar {
  border-bottom-color: #8c9599;
}

/* Workspace */
.workspace {
  flex: 1;
  min-height: 0;
  display: flex;
  background: #efefef;
}
.explorer {
  flex: 0 0 214px;
  display: flex;
  flex-direction: column;
  padding: 0 8px 3px 2px;
  border-top: 1px solid #fff;
}
.pane-header {
  flex: 0 0 16px;
  display: flex;
  align-items: center;
}
.pane-header button {
  width: 13px;
  height: 13px;
}
.pane-header svg {
  display: block;
  width: 12px;
  height: 12px;
}
.grip {
  flex: 1;
  height: 4px;
  margin-right: 7px;
  border: 1px solid #b9b9b9;
  border-width: 1px 0;
}
.pane-body {
  flex: 1;
  display: flex;
  flex-direction: column;
  border: 1px solid #777;
  border-right-color: #ddd;
  border-bottom-color: #ccc;
  background: #fcfcfc;
}
.tabs {
  flex: 0 0 37px;
  display: flex;
  align-items: flex-end;
  padding: 0 2px 3px;
  border-bottom: 1px solid #b5b5b5;
  background: #efefef;
}
.tabs button {
  width: 31px;
  height: 30px;
  border: 1px solid #aaa;
  border-left: 0;
  background: #dedede;
}
.tabs .current {
  width: 38px;
  height: 33px;
  border-color: #fff #999 #fff #fff;
  background: #fff;
}
.tabs svg {
  display: block;
  width: 21px;
  height: 21px;
  margin: 0 auto;
}
.tree {
  height: 304px;
  display: grid;
  grid-auto-rows: 1fr;
  margin: 0;
  padding: 0 0 0 6px;
  list-style: none;
  background: linear-gradient(#ccc, #ccc) 10px 8px / 1px 288px no-repeat;
}
.tree li {
  display: flex;
  align-items: center;
  white-space: nowrap;
}
.tree svg {
  width: 15px;
  height: 15px;
  margin-right: 4px;
}
.toggle,
.branch {
  flex: none;
  width: 9px;
  height: 9px;
  margin-right: 6px;
}
.toggle {
  border: 1px solid #a9a9a9;
  background:
    linear-gradient(#444, #444) center / 5px 1px no-repeat,
    linear-gradient(#444, #444) center / 1px 5px no-repeat,
    #fff;
}
.toggle.open {
  background: linear-gradient(#444, #444) center / 5px 1px no-repeat, #fff;
}
.branch {
  height: 1px;
  width: 12px;
  margin-right: 3px;
  background: linear-gradient(90deg, transparent 5px, #bbb 5px);
}
.bold,
.child {
  font-weight: bold;
}
.child {
  padding-left: 18px;
  font-weight: 600;
}
.tree .child svg {
  margin-right: 0;
}
.tree .child svg:last-of-type {
  margin-right: 4px;
}
.space {
  width: 15px;
}
.hot {
  background: #f1f1f1;
}
.viewport {
  flex: 1;
  min-width: 0;
  background: linear-gradient(#2c4756, #213642 30%, #152630 55%, #0a1216 78%, #000 97%);
}
.viewport svg {
  display: block;
  width: 100%;
  height: 100%;
}
.cube-text {
  fill: #505f68;
  font-size: 7px;
  font-weight: bold;
}
.cube-text.top {
  font-size: 6px;
}
.viewbar {
  flex: 0 0 27px;
  display: flex;
  flex-direction: column;
  align-items: center;
  padding-top: 2px;
  background: #f2f0f2;
}
.viewbar button {
  flex: 0 0 23px;
  width: 24px;
  display: flex;
  align-items: center;
  justify-content: center;
}
.viewbar svg {
  width: 19px;
  height: 19px;
}
.viewbar hr {
  width: 22px;
  margin: 2px 0;
  border: 0;
  border-top: 1px solid #aaa;
}
.viewbar .wide {
  margin: 9px 0 6px;
}
.viewbar .last {
  margin: 4px 0 8px;
}
.viewbar .dismiss {
  width: 14px;
  margin-right: 8px;
}
.viewbar .dismiss svg {
  width: 12px;
  height: 12px;
}
.viewbar .end {
  width: 27px;
}

/* Bottom bars */
.tool-toolbar {
  flex-basis: 30px;
  border-top: 1px solid #d5d5d5;
}
.tool-toolbar .wide {
  flex-basis: 30px;
}
.tool-toolbar .drop {
  flex-basis: 15px;
}
.tool-toolbar .first {
  margin-left: 4px;
}
.tool-toolbar .after-stock {
  margin: 0 2px 0 4px;
}
.tool-toolbar .after-gap {
  margin-left: 48px;
}
.statusbar {
  flex: 0 0 29px;
  padding: 5px 2px;
  background: #efefef;
  border-bottom: 2px solid #b9c3ca;
}

/* Overlays */
.busy {
  position: absolute;
  left: 845px;
  top: 19px;
  width: 18px;
  height: 8px;
}
.watermark {
  position: absolute;
  left: 18px;
  bottom: 20px;
  color: #fff;
  font-family: "DejaVu Sans", sans-serif;
  font-size: 28px;
  font-weight: bold;
  line-height: 24px;
  opacity: 0.5;
  pointer-events: none;
}
```
